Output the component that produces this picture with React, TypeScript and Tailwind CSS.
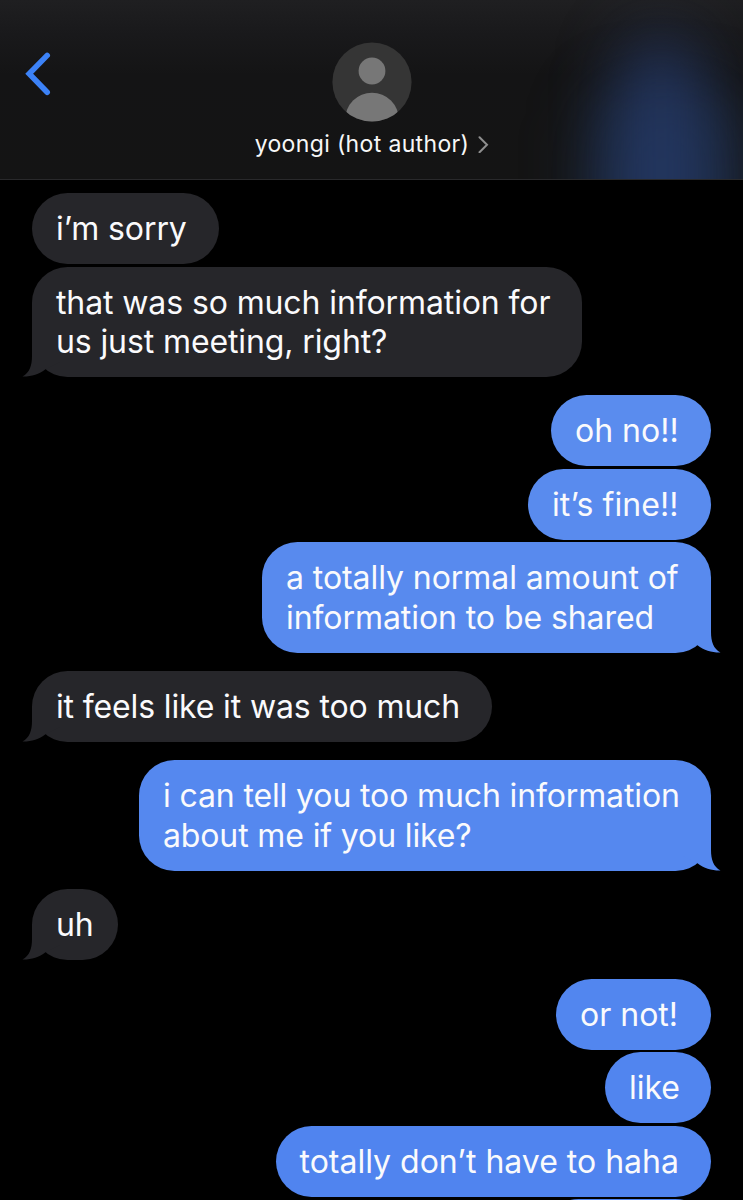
interface Message {
  id: number;
  from: 'them' | 'me';
  lines: string[];
  tail?: boolean;
  className: string;
}

const messages: Message[] = [
  { id: 1, from: 'them', lines: ['i’m sorry'], className: 'mt-[13px] w-[187px] h-[71px] tracking-[-0.1px]' },
  {
    id: 2,
    from: 'them',
    lines: ['that was so much information for', 'us just meeting, right?'],
    tail: true,
    className: 'mt-[3px] w-[550px] h-[110px] tracking-[-0.11px]',
  },
  { id: 3, from: 'me', lines: ['oh no!!'], className: 'mt-[18px] w-[160px] h-[71px] bg-[#5a8cee] text-[#5a8cee]' },
  { id: 4, from: 'me', lines: ['it’s fine!!'], className: 'mt-[3px] w-[183px] h-[71px] bg-[#598bee] text-[#598bee] tracking-[0.1px]' },
  {
    id: 5,
    from: 'me',
    lines: ['a totally normal amount of', 'information to be shared'],
    tail: true,
    className: 'mt-[2px] w-[449px] h-[111px] bg-[#588aee] text-[#588aee] tracking-[-0.07px]',
  },
  {
    id: 6,
    from: 'them',
    lines: ['it feels like it was too much'],
    tail: true,
    className: 'mt-[18px] w-[460px] h-[71px] tracking-[-0.14px]',
  },
  {
    id: 7,
    from: 'me',
    lines: ['i can tell you too much information', 'about me if you like?'],
    tail: true,
    className: 'mt-[18px] w-[572px] h-[111px] bg-[#5588ef] text-[#5588ef] tracking-[-0.13px]',
  },
  { id: 8, from: 'them', lines: ['uh'], tail: true, className: 'mt-[18px] w-[85.5px] h-[71px] tracking-[-0.2px]' },
  { id: 9, from: 'me', lines: ['or not!'], className: 'mt-[19px] w-[155px] h-[71px] bg-[#5286ef] text-[#5286ef]' },
  { id: 10, from: 'me', lines: ['like'], className: 'mt-[2px] w-[106px] h-[71px] bg-[#5185ef] text-[#5185ef]' },
  {
    id: 11,
    from: 'me',
    lines: ['totally don’t have to haha'],
    className: 'mt-[3px] w-[435.5px] h-[71px] bg-[#5084ef] text-[#5084ef]',
  },
  { id: 12, from: 'me', lines: [], className: 'mt-[2px] w-[168px] h-[71px] bg-[#4f83ef] text-[#4f83ef]' },
];

function Tail({ side }: { side: 'left' | 'right' }) {
  return (
    <svg
      width="40"
      height="36"
      viewBox="0 0 40 36"
      fill="currentColor"
      className={`absolute bottom-0 ${side === 'left' ? '-left-[10px]' : '-right-[10px] -scale-x-100'}`}
    >
      <path d="M10 0V15C10 25 7.5 31.5 0.5 35.6C9 35.8 17 33.5 23.5 28.3L40 20V0Z" />
    </svg>
  );
}

function Bubble({ message }: { message: Message }) {
  const mine = message.from === 'me';
  return (
    <div
      className={`relative shrink-0 flex flex-col justify-center rounded-[35.5px] pl-6 ${
        mine ? 'self-end' : 'self-start bg-[#26262a] text-[#26262a]'
      } ${message.className}`}
    >
      {message.tail && <Tail side={mine ? 'right' : 'left'} />}
      {message.lines.map(line => (
        <p key={line} className="relative text-[32px] leading-[39.5px] whitespace-nowrap text-[#fafafc]">
          {line}
        </p>
      ))}
    </div>
  );
}

function Header() {
  return (
    <header className="relative shrink-0 h-[180px] overflow-hidden border-b border-[#29292b] bg-[linear-gradient(to_bottom,#1f1f21_0px,#19191b_35px,#141415_75px,#141414_180px)]">
      {/* Sent bubble showing through the frosted bar */}
      <div className="absolute top-[90px] left-[592px] h-[240px] w-[146px] rounded-[50px] bg-[#24406f]/55 blur-[32px]" />
      <div className="absolute top-[36px] left-[618px] h-[260px] w-[86px] rounded-[40px] bg-[#263c6e]/65 blur-[30px]" />
      <button aria-label="Back" className="absolute left-[22px] top-[49px]">
        <svg width="32" height="50" viewBox="0 0 32 50" fill="none" stroke="#3c82f7" strokeWidth="5.6" strokeLinecap="round" strokeLinejoin="miter">
          <path d="M25.2 6.4L7.2 24.8L25.2 43.2" />
        </svg>
      </button>
      <div className="relative flex flex-col items-center pt-[42px]">
        <svg width="80" height="80" viewBox="0 0 80 80">
          <defs>
            <clipPath id="avatar">
              <circle cx="40" cy="40" r="39.6" />
            </clipPath>
          </defs>
          <g clipPath="url(#avatar)">
            <rect width="80" height="80" fill="#353535" />
            <circle cx="40" cy="29" r="13.4" fill="#777777" />
            <circle cx="40" cy="77.5" r="26.8" fill="#777777" />
          </g>
        </svg>
        <div className="mt-[7px] ml-[1px] flex items-center gap-[9px]">
          <span className="text-[23px] leading-[30px] tracking-[0.35px] whitespace-nowrap text-[#f7f7f7]">yoongi (hot author)</span>
          <svg width="11" height="18" viewBox="0 0 11 18" fill="none" stroke="#8e8e8e" strokeWidth="2" strokeLinecap="round">
            <path d="M1.5 2.3L9 9.8L1.5 17.3" />
          </svg>
        </div>
      </div>
    </header>
  );
}

export default function App() {
  return (
    <div className="flex h-[1200px] w-[743px] flex-col overflow-hidden bg-black font-['Inter',sans-serif]">
      <Header />
      <main className="flex flex-col px-8">
        {messages.map(message => (
          <Bubble key={message.id} message={message} />
        ))}
      </main>
    </div>
  );
}
